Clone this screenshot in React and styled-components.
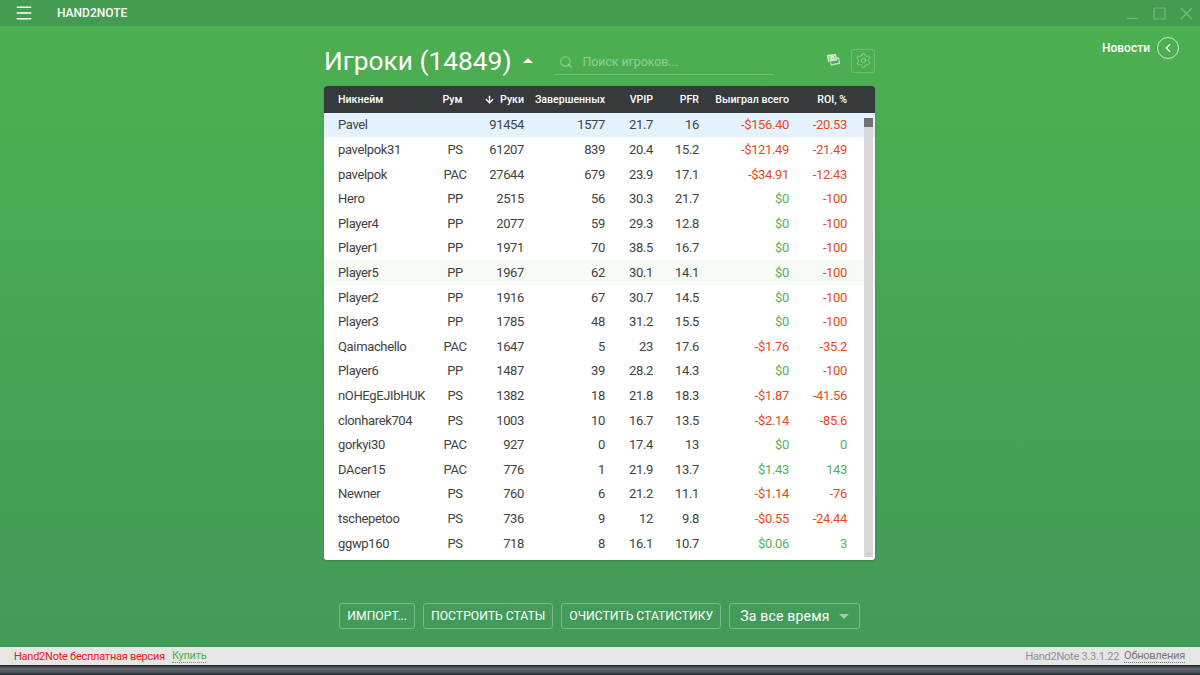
import React from "react";
import styled, { createGlobalStyle } from "styled-components";
import { Menu, Search, ChevronLeft, Settings, ArrowDown } from "lucide-react";

const players = [
  ["Pavel", "", 91454, 1577, "21.7", "16", "-$156.40", "-20.53"],
  ["pavelpok31", "PS", 61207, 839, "20.4", "15.2", "-$121.49", "-21.49"],
  ["pavelpok", "PAC", 27644, 679, "23.9", "17.1", "-$34.91", "-12.43"],
  ["Hero", "PP", 2515, 56, "30.3", "21.7", "$0", "-100"],
  ["Player4", "PP", 2077, 59, "29.3", "12.8", "$0", "-100"],
  ["Player1", "PP", 1971, 70, "38.5", "16.7", "$0", "-100"],
  ["Player5", "PP", 1967, 62, "30.1", "14.1", "$0", "-100"],
  ["Player2", "PP", 1916, 67, "30.7", "14.5", "$0", "-100"],
  ["Player3", "PP", 1785, 48, "31.2", "15.5", "$0", "-100"],
  ["Qaimachello", "PAC", 1647, 5, "23", "17.6", "-$1.76", "-35.2"],
  ["Player6", "PP", 1487, 39, "28.2", "14.3", "$0", "-100"],
  ["nOHEgEJIbHUK", "PS", 1382, 18, "21.8", "18.3", "-$1.87", "-41.56"],
  ["clonharek704", "PS", 1003, 10, "16.7", "13.5", "-$2.14", "-85.6"],
  ["gorkyi30", "PAC", 927, 0, "17.4", "13", "$0", "0"],
  ["DAcer15", "PAC", 776, 1, "21.9", "13.7", "$1.43", "143"],
  ["Newner", "PS", 760, 6, "21.2", "11.1", "-$1.14", "-76"],
  ["tschepetoo", "PS", 736, 9, "12", "9.8", "-$0.55", "-24.44"],
  ["ggwp160", "PS", 718, 8, "16.1", "10.7", "$0.06", "3"],
];

const Global = createGlobalStyle`
  html, body { margin: 0; height: 100%; background: #2b2f33; }
  body { font-family: Roboto, "Liberation Sans", sans-serif; overflow: hidden; }
  #root { height: 100%; }
`;

const Window = styled.div`
  width: 1200px;
  height: 675px;
  display: flex;
  flex-direction: column;
`;

const TitleBar = styled.div`
  height: 26px;
  flex: none;
  display: flex;
  align-items: center;
  padding: 0 7px 0 14px;
  background: #439c4f;
  color: #fff;
`;

const AppName = styled.div`
  margin-left: 23px;
  font-size: 12px;
  font-weight: 500;
  flex: 1;
`;

const WindowButtons = styled.div`
  display: flex;
  align-items: center;
  gap: 14px;
  color: rgba(255, 255, 255, 0.28);
`;

const Main = styled.div`
  flex: 1;
  min-height: 0;
  position: relative;
  display: flex;
  flex-direction: column;
  align-items: center;
  background: linear-gradient(180deg, #4caf50, #429a5a);
`;

const Column = styled.div`
  width: 551px;
  margin-left: -1px;
`;

const Head = styled.div`
  height: 60px;
  display: flex;
  align-items: center;
  color: #fff;
  padding-top: 9px;
  box-sizing: border-box;
`;

const Title = styled.h1`
  margin: 0;
  font-size: 26.3px;
  font-weight: 400;
  line-height: 32px;
`;

const Caret = styled.span`
  width: 0;
  height: 0;
  margin: 0 0 0 11px;
  border-left: 5px solid transparent;
  border-right: 5px solid transparent;
  border-bottom: 5px solid #fff;
`;

const SearchBox = styled.div`
  width: 220px;
  height: 26px;
  margin: 3px 0 0 21px;
  display: flex;
  align-items: center;
  gap: 10px;
  padding-left: 5px;
  box-sizing: border-box;
  border-bottom: 1px solid rgba(255, 255, 255, 0.2);
  color: rgba(255, 255, 255, 0.4);
  font-size: 12.3px;
`;

const HeadIcons = styled.div`
  margin-left: auto;
  display: flex;
  align-items: center;
  gap: 10px;
  color: rgba(255, 255, 255, 0.65);
`;

const GearBox = styled.div`
  width: 24px;
  height: 24px;
  display: flex;
  align-items: center;
  justify-content: center;
  box-sizing: border-box;
  border: 1px solid rgba(255, 255, 255, 0.2);
  border-radius: 3px;
  color: rgba(255, 255, 255, 0.42);
`;

const News = styled.div`
  position: absolute;
  top: 11px;
  right: 21px;
  display: flex;
  align-items: center;
  gap: 7px;
  color: #fff;
  font-size: 12px;
  font-weight: 500;
`;

const NewsButton = styled.div`
  width: 20px;
  height: 20px;
  display: flex;
  align-items: center;
  justify-content: center;
  border: 1px solid rgba(255, 255, 255, 0.7);
  border-radius: 50%;
`;

const Table = styled.div`
  position: relative;
  height: 474px;
  background: #fff;
  border-radius: 3px;
  overflow: hidden;
  box-shadow: 0 1px 2px rgba(0, 0, 0, 0.15);
`;

const gridColumns = "97px 35px 54px 81px 48px 46px 90px 58px";

const HeaderRow = styled.div`
  height: 26.5px;
  display: grid;
  grid-template-columns: ${gridColumns};
  align-items: center;
  padding-left: 14px;
  background: #363a3d;
  color: #fff;
  font-size: 10.6px;
  font-weight: 500;
  box-shadow: 0 1px 2px rgba(0, 0, 0, 0.3);
`;

const Row = styled.div`
  height: 24.62px;
  display: grid;
  grid-template-columns: ${gridColumns};
  align-items: center;
  padding-left: 14px;
  background: ${(p) => (p.$selected ? "#e3f2fd" : p.$hover ? "#f6fbf6" : "transparent")};
  color: #424242;
  font-size: 13px;
  letter-spacing: -0.35px;
`;

const Cell = styled.div`
  text-align: ${(p) => p.$align || "right"};
  white-space: nowrap;
  color: ${(p) => p.$color || "inherit"};
`;

const RoomCell = styled(Cell)`
  text-align: center;
  padding-left: 5px;
`;

const SortCell = styled(Cell)`
  display: flex;
  align-items: center;
  justify-content: flex-end;
  gap: 5px;
`;

const Scrollbar = styled.div`
  position: absolute;
  top: 32px;
  right: 2px;
  bottom: 3px;
  width: 9px;
  background: #d8d8d8;
`;

const ScrollThumb = styled.div`
  height: 9px;
  background: #707070;
`;

const ScrollEnd = styled.div`
  position: absolute;
  bottom: 0;
  left: 1px;
  width: 0;
  height: 0;
  border-left: 4px solid transparent;
  border-right: 4px solid transparent;
  border-top: 4px solid #cfcfcf;
`;

const Actions = styled.div`
  display: flex;
  justify-content: center;
  align-items: center;
  gap: 8px;
  margin-top: 43px;
`;

const Button = styled.button`
  height: 26px;
  padding: 0 7px;
  box-sizing: border-box;
  background: transparent;
  border: 1px solid rgba(255, 255, 255, 0.3);
  border-radius: 3px;
  color: #fff;
  font-family: inherit;
  font-size: 12.2px;
  display: flex;
  align-items: center;
`;

const SelectButton = styled(Button)`
  font-size: 14px;
  padding: 0 10px;
  gap: 9px;
  letter-spacing: 0.2px;
`;

const SelectCaret = styled.span`
  width: 0;
  height: 0;
  border-left: 5px solid transparent;
  border-right: 5px solid transparent;
  border-top: 5px solid rgba(255, 255, 255, 0.5);
`;

const StatusBar = styled.div`
  height: 18px;
  flex: none;
  display: flex;
  align-items: center;
  padding: 0 15px 0 14px;
  background: #e6e6e6;
  font-size: 11px;
  letter-spacing: -0.25px;
  box-shadow: 0 1px 2px rgba(0, 0, 0, 0.6);
  position: relative;
`;

const FreeLabel = styled.span`
  color: #f01414;
`;

const StatusLink = styled.span`
  margin-left: ${(p) => p.$gap}px;
  color: ${(p) => p.$color};
  border-bottom: 1px dotted ${(p) => p.$color};
  line-height: 12px;
`;

const Version = styled.span`
  margin-left: auto;
  color: #8f8f8f;
`;

const Desktop = styled.div`
  height: 10px;
  flex: none;
  background: linear-gradient(180deg, #3d4248, #666c74 40%, #4a4f55 75%, #24272b);
`;

const RED = "#e64a19";
const GREEN = "#55b259";
const tone = (v) => (String(v).startsWith("-") ? RED : GREEN);

const MinimizeIcon = () => (
  <svg width="13" height="13" viewBox="0 0 13 13" stroke="currentColor" strokeWidth="1.2">
    <path d="M1 11.5h11" />
  </svg>
);

const MaximizeIcon = () => (
  <svg width="13" height="13" viewBox="0 0 13 13" fill="none" stroke="currentColor" strokeWidth="1.2">
    <path d="M1 1h11v11H1z" />
  </svg>
);

const CloseIcon = () => (
  <svg width="13" height="13" viewBox="0 0 13 13" stroke="currentColor" strokeWidth="1.1">
    <path d="M1 1l11 11M12 1L1 12" />
  </svg>
);

const CashIcon = () => (
  <svg width="15" height="15" viewBox="0 0 15 15" fill="none" stroke="currentColor" strokeWidth="1.3">
    <path d="M1.5 2.5l8-1 1 5.5-8 1.2z" fill="currentColor" fillOpacity="0.6" />
    <path d="M4.5 9.5l1 2.5 8-1.8-1-5.2-2 .3" />
    <circle cx="6" cy="5" r="1.5" />
  </svg>
);

const App = () => (
  <Window>
    <Global />
    <TitleBar>
      <Menu size={20} strokeWidth={1.8} />
      <AppName>HAND2NOTE</AppName>
      <WindowButtons>
        <MinimizeIcon />
        <MaximizeIcon />
        <CloseIcon />
      </WindowButtons>
    </TitleBar>
    <Main>
      <News>
        Новости
        <NewsButton>
          <ChevronLeft size={14} />
        </NewsButton>
      </News>
      <Column>
        <Head>
          <Title>Игроки (14849)</Title>
          <Caret />
          <SearchBox>
            <Search size={14} />
            Поиск игроков...
          </SearchBox>
          <HeadIcons>
            <CashIcon />
            <GearBox>
              <Settings size={17} strokeWidth={1.3} />
            </GearBox>
          </HeadIcons>
        </Head>
        <Table>
          <HeaderRow>
            <Cell $align="left">Никнейм</Cell>
            <Cell $align="center">Рум</Cell>
            <SortCell>
              <ArrowDown size={11} strokeWidth={3} />
              Руки
            </SortCell>
            <Cell>Завершенных</Cell>
            <Cell>VPIP</Cell>
            <Cell>PFR</Cell>
            <Cell>Выиграл всего</Cell>
            <Cell>ROI, %</Cell>
          </HeaderRow>
          {players.map((p, i) => (
            <Row key={p[0]} $selected={i === 0} $hover={p[0] === "Player5"}>
              <Cell $align="left">{p[0]}</Cell>
              <RoomCell>{p[1]}</RoomCell>
              <Cell>{p[2]}</Cell>
              <Cell>{p[3]}</Cell>
              <Cell>{p[4]}</Cell>
              <Cell>{p[5]}</Cell>
              <Cell $color={tone(p[6])}>{p[6]}</Cell>
              <Cell $color={tone(p[7])}>{p[7]}</Cell>
            </Row>
          ))}
          <Scrollbar>
            <ScrollThumb />
            <ScrollEnd />
          </Scrollbar>
        </Table>
        <Actions>
          <Button>ИМПОРТ...</Button>
          <Button>ПОСТРОИТЬ СТАТЫ</Button>
          <Button>ОЧИСТИТЬ СТАТИСТИКУ</Button>
          <SelectButton>
            За все время
            <SelectCaret />
          </SelectButton>
        </Actions>
      </Column>
    </Main>
    <StatusBar>
      <FreeLabel>Hand2Note бесплатная версия</FreeLabel>
      <StatusLink $color="#4caf50" $gap={7}>Купить</StatusLink>
      <Version>Hand2Note 3.3.1.22</Version>
      <StatusLink $color="#777" $gap={5}>Обновления</StatusLink>
    </StatusBar>
    <Desktop />
  </Window>
);

export default App;
